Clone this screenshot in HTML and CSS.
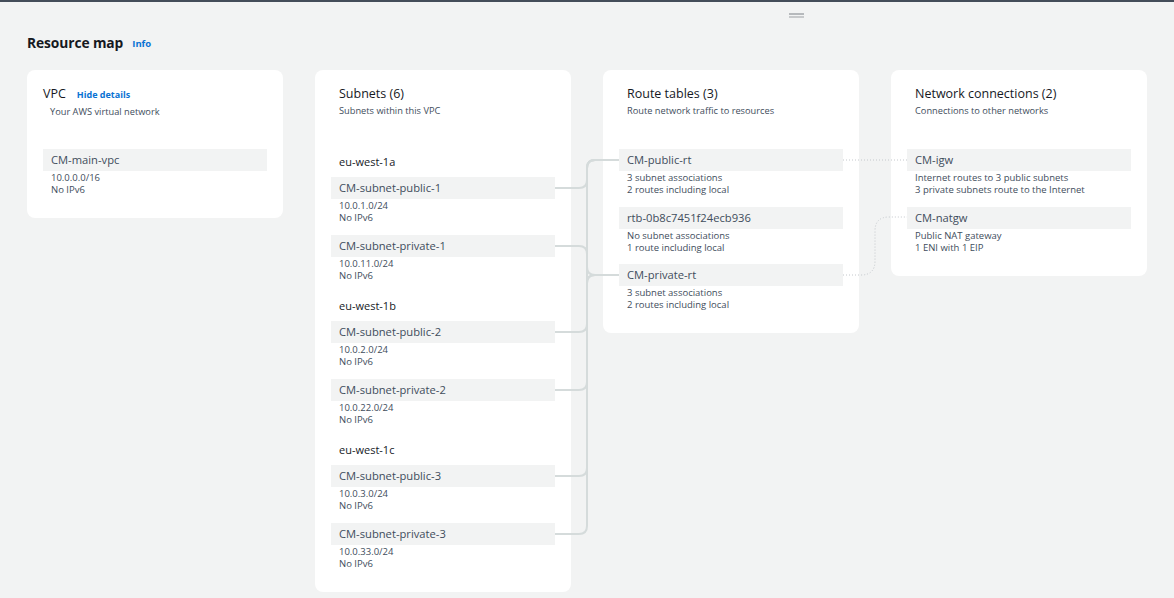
FILE: index.html
```html
<!DOCTYPE html>
<html>
<head>
<meta charset="utf-8">
<link rel="stylesheet" href="styles.css">
</head>
<body>
<div class="top"><div class="handle"></div></div>
<div class="page">
  <div class="header"><h1>Resource map</h1><a class="link info">Info</a></div>
  <div class="columns">
    <section class="card vpc">
      <div class="title-row"><span class="title">VPC</span><a class="link">Hide details</a></div>
      <div class="subtitle">Your AWS virtual network</div>
      <div class="list">
        <div class="item"><div class="row">CM-main-vpc</div><div class="details">10.0.0.0/16<br>No IPv6</div></div>
      </div>
    </section>
    <section class="card">
      <div class="title">Subnets (6)</div>
      <div class="subtitle">Subnets within this VPC</div>
      <div class="list groups">
        <div class="group">
          <div class="az">eu-west-1a</div>
          <div class="item"><div class="row">CM-subnet-public-1</div><div class="details">10.0.1.0/24<br>No IPv6</div></div>
          <div class="item"><div class="row">CM-subnet-private-1</div><div class="details">10.0.11.0/24<br>No IPv6</div></div>
        </div>
        <div class="group">
          <div class="az">eu-west-1b</div>
          <div class="item"><div class="row">CM-subnet-public-2</div><div class="details">10.0.2.0/24<br>No IPv6</div></div>
          <div class="item"><div class="row">CM-subnet-private-2</div><div class="details">10.0.22.0/24<br>No IPv6</div></div>
        </div>
        <div class="group">
          <div class="az">eu-west-1c</div>
          <div class="item"><div class="row">CM-subnet-public-3</div><div class="details">10.0.3.0/24<br>No IPv6</div></div>
          <div class="item"><div class="row">CM-subnet-private-3</div><div class="details">10.0.33.0/24<br>No IPv6</div></div>
        </div>
      </div>
    </section>
    <section class="card">
      <div class="title">Route tables (3)</div>
      <div class="subtitle">Route network traffic to resources</div>
      <div class="list tight">
        <div class="item"><div class="row">CM-public-rt</div><div class="details">3 subnet associations<br>2 routes including local</div></div>
        <div class="item"><div class="row">rtb-0b8c7451f24ecb936</div><div class="details">No subnet associations<br>1 route including local</div></div>
        <div class="item"><div class="row">CM-private-rt</div><div class="details">3 subnet associations<br>2 routes including local</div></div>
      </div>
    </section>
    <section class="card">
      <div class="title">Network connections (2)</div>
      <div class="subtitle">Connections to other networks</div>
      <div class="list tight">
        <div class="item"><div class="row">CM-igw</div><div class="details">Internet routes to 3 public subnets<br>3 private subnets route to the Internet</div></div>
        <div class="item"><div class="row">CM-natgw</div><div class="details">Public NAT gateway<br>1 ENI with 1 EIP</div></div>
      </div>
    </section>
  </div>
</div>
<svg class="links" width="1174" height="598" viewBox="0 0 1174 598">
  <g class="solid">
    <path d="M555 188 H579 Q587 188 587 180 V168 Q587 160 595 160 H619"/>
    <path d="M555 332 H579 Q587 332 587 324 V168 Q587 160 595 160 H619"/>
    <path d="M555 476 H579 Q587 476 587 468 V168 Q587 160 595 160 H619"/>
    <path d="M555 246 H579 Q587 246 587 254 V267 Q587 275 595 275 H619"/>
    <path d="M555 390 H579 Q587 390 587 382 V283 Q587 275 595 275 H619"/>
    <path d="M555 534 H579 Q587 534 587 526 V283 Q587 275 595 275 H619"/>
  </g>
  <g class="dotted">
    <path d="M843 160 H907"/>
    <path d="M843 275 H861 Q875 275 875 261 V231 Q875 217 889 217 H907"/>
  </g>
</svg>
</body>
</html>
```
FILE: styles.css
```css
* { box-sizing: border-box; }
html, body { margin: 0; padding: 0; }
body {
  position: relative;
  width: 1174px;
  height: 598px;
  overflow: hidden;
  background: #f2f3f3;
  font-family: "Open Sans", "Noto Sans", sans-serif;
  color: #16191f;
  border-top: 2px solid #444d59;
}
.top { height: 28px; padding-top: 11px; }
.handle {
  margin-left: 789px;
  width: 15px;
  height: 5px;
  border-top: 2px solid #b6b9bc;
  border-bottom: 2px solid #c7c9cb;
}
.page { padding: 0 27px; }
.header { display: flex; align-items: center; height: 24px; gap: 9px; margin-bottom: 16px; }
h1 { margin: 0; font-size: 13.8px; font-weight: 700; color: #16191f; letter-spacing: -0.1px; }
.link { color: #0972d3; font-weight: 700; font-size: 9.5px; }
.info { padding-top: 2px; }
.columns { display: flex; align-items: flex-start; gap: 32px; }
.card {
  width: 256px;
  background: #fff;
  border-radius: 8px;
  padding: 16px 16px 22px;
}
.title { display: block; font-size: 12.5px; line-height: 16px; padding-left: 8px; color: #16191f; }
.subtitle { font-size: 9.25px; line-height: 12px; margin-top: 3px; padding-left: 8px; color: #414d5c; }
.title-row { display: flex; align-items: center; gap: 11px; height: 16px; }
.title-row .link { font-size: 9px; padding-top: 1px; }
.vpc .title { padding-left: 0; }
.vpc .subtitle { padding-left: 7px; margin-top: 4px; }
.list { margin-top: 32px; display: flex; flex-direction: column; gap: 11px; }
.vpc .list { margin-top: 31px; }
.tight { gap: 10.5px; }
.groups { gap: 11px; }
.group { display: flex; flex-direction: column; gap: 11px; }
.az { font-size: 11px; line-height: 14px; padding-left: 8px; margin-top: 6px; margin-bottom: -3px; color: #16191f; }
.row {
  height: 22px;
  line-height: 22px;
  background: #f2f3f3;
  padding-left: 8px;
  font-size: 11.2px;
  color: #414d5c;
}
.details { padding: 1px 8px 0; font-size: 9.5px; line-height: 12px; color: #414d5c; }
.links { position: absolute; left: 0; top: -2px; pointer-events: none; }
.solid path { fill: none; stroke: #d5dbdb; stroke-width: 2; }
.dotted path { fill: none; stroke: #c4c8cc; stroke-width: 1; stroke-dasharray: 1 2; }
```
